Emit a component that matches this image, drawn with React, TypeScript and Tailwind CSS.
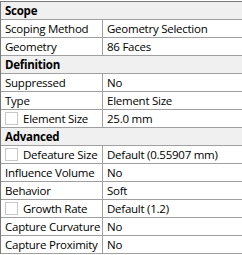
import React from "react";

type Row =
  | { kind: "header"; label: string }
  | { kind: "row"; label: string; value: string; check?: boolean };

const rows: Row[] = [
  { kind: "header", label: "Scope" },
  { kind: "row", label: "Scoping Method", value: "Geometry Selection" },
  { kind: "row", label: "Geometry", value: "86 Faces" },
  { kind: "header", label: "Definition" },
  { kind: "row", label: "Suppressed", value: "No" },
  { kind: "row", label: "Type", value: "Element Size" },
  { kind: "row", label: "Element Size", value: "25.0 mm", check: true },
  { kind: "header", label: "Advanced" },
  { kind: "row", label: "Defeature Size", value: "Default (0.55907 mm)", check: true },
  { kind: "row", label: "Influence Volume", value: "No" },
  { kind: "row", label: "Behavior", value: "Soft" },
  { kind: "row", label: "Growth Rate", value: "Default (1.2)", check: true },
  { kind: "row", label: "Capture Curvature", value: "No" },
  { kind: "row", label: "Capture Proximity", value: "No" },
];

export default function App() {
  return (
    <div
      className="w-[242px] h-[255px] bg-white text-[11.5px] tracking-[-0.25px] leading-none text-black overflow-hidden"
      style={{ fontFamily: '"Open Sans", "Noto Sans", sans-serif' }}
    >
      <div className="pt-px">
        <div className="border-t border-l border-[#7a7a7a]">
          {rows.map((r, i) =>
            r.kind === "header" ? (
              <div
                key={i}
                className="h-[18px] flex items-center pl-[4px] font-bold bg-[#f0f0f0] border-b border-[#a0a0a0]"
              >
                {r.label}
              </div>
            ) : (
              <div key={i} className="h-[18px] flex border-b border-[#a0a0a0] bg-white">
                <div className="w-[102px] shrink-0 flex items-center pl-[4px] border-r border-[#a0a0a0] whitespace-nowrap">
                  {r.check && (
                    <span className="w-[13px] h-[13px] border border-[#c8c8c8] bg-white mr-[5px] shrink-0" />
                  )}
                  {r.label}
                </div>
                <div className="flex items-center pl-[4px] whitespace-nowrap">{r.value}</div>
              </div>
            )
          )}
        </div>
      </div>
    </div>
  );
}
